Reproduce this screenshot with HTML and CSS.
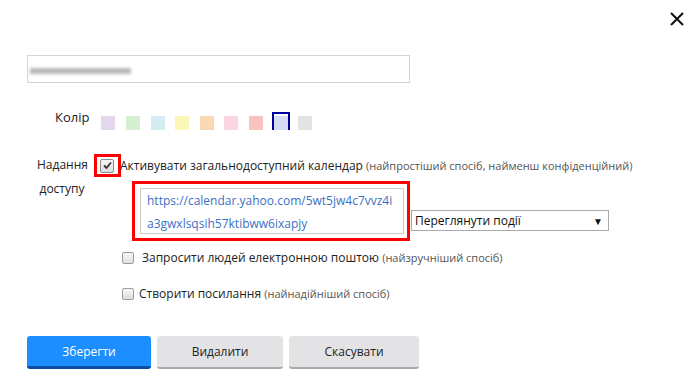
FILE: index.html
```html
<!DOCTYPE html>
<html lang="uk">
<head>
    <meta charset="UTF-8">
    <title>Календар</title>
    <link rel="stylesheet" href="styles.css">
</head>
<body>

<div class="dialog">
    <div class="topbar">
        <span class="close">
            <svg width="14" height="14" viewBox="0 0 14 14"><path d="M1 1L13 13M13 1L1 13" stroke="#111" stroke-width="2" fill="none"/></svg>
        </span>
    </div>

    <div class="name-field">
        <div class="blurred"></div>
    </div>

    <div class="color-row">
        <span class="label">Колір</span>
        <div class="swatches">
            <span class="swatch" style="background:#e3d8ec"></span>
            <span class="swatch" style="background:#d5efd3"></span>
            <span class="swatch" style="background:#d3edf2"></span>
            <span class="swatch" style="background:#fbf8b7"></span>
            <span class="swatch" style="background:#f9d9b4"></span>
            <span class="swatch" style="background:#fbd5df"></span>
            <span class="swatch" style="background:#f9c3c0"></span>
            <span class="swatch selected" style="background:#d3dcf4"></span>
            <span class="swatch" style="background:#e3e3e3"></span>
        </div>
    </div>

    <div class="share-row">
        <div class="share-label">Надання<br>доступу</div>
        <div class="share-options">
            <div class="option-main">
                <span class="highlight small">
                    <span class="check checked">
                        <svg width="9" height="9" viewBox="0 0 9 9"><path d="M1 4.5L3.5 7L8 1.5" stroke="#333" stroke-width="1.8" fill="none"/></svg>
                    </span>
                </span>
                <span class="option-text">Активувати загальнодоступний календар <span class="hint">(найпростіший спосіб, найменш конфіденційний)</span></span>
            </div>
            <div class="link-row">
                <div class="highlight wide">
                    <div class="link-box">https://calendar.yahoo.com/5wt5jw4c7vvz4i<br>a3gwxlsqsih57ktibww6ixapjy</div>
                </div>
                <div class="select">
                    <span>Переглянути події</span>
                    <span class="arrow">&#9660;</span>
                </div>
            </div>
            <div class="option">
                <span class="check"></span>
                <span class="option-text first">Запросити людей електронною поштою <span class="hint">(найзручніший спосіб)</span></span>
            </div>
            <div class="option second">
                <span class="check"></span>
                <span class="option-text">Створити посилання <span class="hint">(найнадійніший спосіб)</span></span>
            </div>
        </div>
    </div>

    <div class="buttons">
        <button class="btn primary">Зберегти</button>
        <button class="btn delete">Видалити</button>
        <button class="btn cancel">Скасувати</button>
    </div>
</div>

</body>
</html>
```

FILE: styles.css
```css
body {
    margin: 0;
    font-family: 'Open Sans', 'Noto Sans', sans-serif;
    font-size: 12px;
    color: #222;
    background-color: #fff;
}
.dialog {
    width: 697px;
    height: 386px;
    overflow: hidden;
}
.topbar {
    display: flex;
    justify-content: flex-end;
    padding: 12px 13px 0 0;
    height: 14px;
}
.close {
    display: block;
    width: 14px;
    height: 14px;
}
.close svg {
    display: block;
}
.name-field {
    box-sizing: border-box;
    margin: 29px 0 0 27px;
    width: 383px;
    height: 28px;
    border: 1px solid #d4d4d4;
    padding: 12px 0 0 2px;
}
.blurred {
    width: 101px;
    height: 6px;
    background-color: #b9b9b9;
    filter: blur(1.4px);
}
.color-row {
    display: flex;
    align-items: flex-start;
    margin: 25px 0 0 55px;
}
.color-row .label {
    font-size: 13px;
    line-height: 18px;
}
.swatches {
    display: flex;
    gap: 10.6px;
    margin: 8px 0 0 12px;
}
.swatch {
    display: block;
    width: 14px;
    height: 14px;
    position: relative;
}
.swatch.selected::before {
    content: "";
    position: absolute;
    left: -2px;
    right: -2px;
    top: -4px;
    bottom: 0;
    border: 2px solid #00009e;
    border-bottom: none;
}
.share-row {
    display: flex;
    margin: 23px 0 0 37px;
}
.share-label {
    width: 50px;
    margin-right: 7px;
    text-align: center;
    line-height: 24px;
}
.share-options {
    display: flex;
    flex-direction: column;
}
.option-main {
    display: flex;
    align-items: center;
    margin-top: 1px;
}
.highlight {
    border: 3px solid #f00;
}
.highlight.small {
    box-sizing: border-box;
    display: flex;
    align-items: center;
    width: 27px;
    height: 23px;
    padding-left: 3px;
}
.option-text {
    margin-left: -1px;
    line-height: 20px;
    white-space: nowrap;
}
.hint {
    font-size: 11px;
    color: #555;
}
.check {
    box-sizing: border-box;
    display: flex;
    align-items: center;
    justify-content: center;
    width: 12px;
    height: 12px;
    border: 1px solid #9a9a9a;
    border-radius: 2px;
    background: linear-gradient(#f7f7f7, #dedede);
}
.check.checked {
    width: 14px;
    height: 14px;
    border-color: #8a8a8a;
}
.check svg {
    display: block;
}
.link-row {
    display: flex;
    align-items: flex-end;
    margin: 4px 0 0 38px;
}
.highlight.wide {
    padding: 4px 3px 4px 5px;
}
.link-box {
    box-sizing: border-box;
    width: 264px;
    height: 46px;
    border: 1px solid #cbcbcb;
    padding-left: 6px;
    line-height: 23px;
    color: #3c6fc5;
    white-space: nowrap;
    overflow: hidden;
}
.select {
    box-sizing: border-box;
    display: flex;
    justify-content: space-between;
    align-items: center;
    width: 198px;
    height: 21px;
    margin: 0 0 10px 1px;
    padding: 0 5px 0 3px;
    border: 1px solid #a9a9a9;
    color: #111;
}
.select .arrow {
    font-size: 10px;
    color: #111;
}
.option {
    display: flex;
    align-items: center;
    height: 20px;
    margin: 7px 0 0 28px;
}
.option.second {
    margin-top: 16px;
}
.option .option-text {
    margin-left: 5px;
}
.option .option-text.first {
    margin-left: 8px;
}
.buttons {
    display: flex;
    gap: 6px;
    margin: 32px 0 0 27px;
}
.btn {
    font-family: 'Open Sans', 'Noto Sans', sans-serif;
    font-size: 12px;
    height: 33px;
    border: none;
    border-radius: 3px;
    padding: 0;
    cursor: pointer;
}
.primary {
    width: 124px;
    background-color: #1d8eff;
    color: #fff;
    border-bottom: 3px solid #0b4fa3;
}
.delete {
    width: 126px;
    background-color: #e3e3e6;
    color: #222;
    border-bottom: 2px solid #a9a9ac;
}
.cancel {
    width: 130px;
    background-color: #e3e3e6;
    color: #222;
    border-bottom: 2px solid #a9a9ac;
}
```
